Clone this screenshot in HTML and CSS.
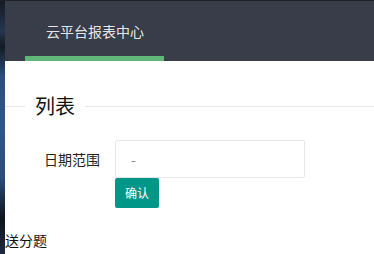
FILE: index.html
```html
<!DOCTYPE html>
<html lang="zh-CN">
<head>
  <meta charset="UTF-8">
  <meta name="viewport" content="width=device-width, initial-scale=1.0">
  <title>云平台报表中心</title>
  <link rel="stylesheet" href="styles.css">
</head>
<body>
  <div class="desk"></div>
  <div class="page">
    <div class="header">
      <ul class="nav">
        <li class="nav-item active">云平台报表中心</li>
      </ul>
    </div>

    <fieldset class="field-title">
      <legend>列表</legend>
    </fieldset>

    <form class="form">
      <div class="form-item">
        <label class="form-label">日期范围</label>
        <div class="input-inline">
          <input class="input" type="text" value="-">
          <button type="button" class="btn btn-sm">确认</button>
        </div>
      </div>
    </form>

    <div class="extra">送分题</div>
  </div>
</body>
</html>
```

FILE: styles.css
```css
*{
  box-sizing: border-box;
}

body{
  margin: 0;
  display: flex;
  min-height: 100vh;
  font-family: "Noto Sans CJK SC", "Noto Sans", sans-serif;
  font-size: 14px;
  color: #333;
  background: #fff;
}

.desk{
  flex: 0 0 5px;
  border-top: 1px solid #1f2126;
  background: linear-gradient(180deg, #161b24 0%, #24364e 12%, #141a24 18%, #2b4f7c 30%, #30578a 50%, #2a4c78 70%, #0f141c 86%, #1d2c42 100%);
}

.page{
  flex: 1;
  border-top: 1px solid #1f2126;
}

.header{
  height: 60px;
  background: #393d49;
  padding-left: 20px;
}

.nav{
  margin: 0;
  padding: 0;
  list-style: none;
  display: flex;
  height: 100%;
}

.nav-item{
  position: relative;
  padding: 0 20px 0 21px;
  line-height: 60px;
  color: rgba(255, 255, 255, 0.9);
  font-size: 14px;
}

.nav-item.active::after{
  content: "";
  position: absolute;
  left: 0;
  right: 0;
  bottom: 0;
  height: 5px;
  background: #5fb878;
}

.field-title{
  margin: 31px 0 0;
  padding: 0;
  border: none;
  border-top: 1px solid #e6e6e6;
}

.field-title legend{
  margin-left: 20px;
  padding: 0 10px;
  font-size: 20px;
  font-weight: 400;
  line-height: 28px;
  color: #111;
}

.form{
  margin-top: 20px;
}

.form-item{
  display: flex;
  align-items: flex-start;
}

.form-label{
  width: 110px;
  padding: 9px 15px;
  line-height: 20px;
  text-align: right;
  color: #222;
}

.input-inline{
  width: 190px;
}

.input{
  display: block;
  width: 190px;
  height: 38px;
  margin: 0;
  padding: 0 0 0 15px;
  border: 1px solid #e6e6e6;
  border-radius: 2px;
  font-family: inherit;
  font-size: 14px;
  color: #888;
  outline: none;
}

.btn{
  display: inline-block;
  border: none;
  border-radius: 2px;
  background: #009688;
  color: #fff;
  font-family: inherit;
  cursor: pointer;
}

.btn-sm{
  height: 30px;
  padding: 0 10px;
  font-size: 12px;
  line-height: 30px;
}

.extra{
  margin-top: 22px;
  line-height: 20px;
  color: #111;
}
```
